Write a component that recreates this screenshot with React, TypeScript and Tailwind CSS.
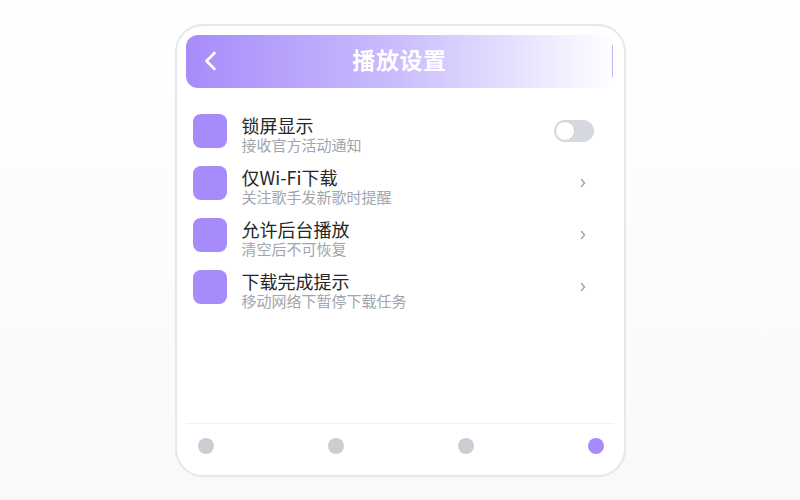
import * as React from "react";

type Item = {
  title: string;
  desc: string;
  toggle?: boolean;
};

const items: Item[] = [
  { title: "锁屏显示", desc: "接收官方活动通知", toggle: true },
  { title: "仅Wi-Fi下载", desc: "关注歌手发新歌时提醒" },
  { title: "允许后台播放", desc: "清空后不可恢复" },
  { title: "下载完成提示", desc: "移动网络下暂停下载任务" },
];

const Row = ({ title, desc, toggle }: Item) => (
  <div className="flex items-start gap-[15px] h-10">
    <div className="w-[34px] h-[34px] rounded-lg bg-[#a78bfa] shrink-0" />
    <div className="flex flex-col flex-1">
      <span className="text-[18px] leading-[22px] text-[#262626]">{title}</span>
      <span className="text-[15px] leading-[18px] text-[#a1a5ad]">{desc}</span>
    </div>
    <div className="h-[34px] flex items-center">
      {toggle ? (
        <div className="w-10 h-[22px] rounded-full bg-[#d5d8de] flex items-center px-px">
          <div className="w-5 h-5 rounded-full bg-white border border-[#d1d5db]" />
        </div>
      ) : (
        <svg width="6" height="10" viewBox="0 0 6 10" className="mr-2">
          <polyline
            points="1.5,1.5 4.5,5 1.5,8.5"
            fill="none"
            stroke="#9ca3af"
            strokeWidth="1.4"
            strokeLinecap="round"
            strokeLinejoin="round"
          />
        </svg>
      )}
    </div>
  </div>
);

export default function App() {
  return (
    <div
      className="h-[500px] w-full flex items-center justify-center bg-linear-to-b from-white to-[#f9f9fa]"
      style={{ fontFamily: '"Noto Sans CJK SC", "Noto Sans", sans-serif' }}
    >
      <div className="w-[451px] h-[453px] rounded-[28px] border-2 border-[#e6e7eb] bg-white flex flex-col pt-[9px] pl-[9px] pr-[10px]">
        <div className="h-[53px] rounded-xl bg-linear-to-r from-[#a78bfa] via-[#cbbdfd] to-white grid grid-cols-[1fr_auto_1fr] items-center">
          <div className="pl-[18px]">
            <svg width="13" height="20" viewBox="0 0 13 20">
              <polyline
                points="10.5,2 2.5,10 10.5,18"
                fill="none"
                stroke="white"
                strokeWidth="2.6"
                strokeLinecap="round"
                strokeLinejoin="round"
              />
            </svg>
          </div>
          <h1 className="text-[23px] leading-8 pb-1 font-bold text-white tracking-wide">播放设置</h1>
          <div className="flex justify-end pr-px">
            <div className="w-px h-8 bg-[#c4b5fd]" />
          </div>
        </div>

        <div className="flex flex-col gap-3 mt-[26px] pl-[7px] pr-[20px]">
          {items.map((it) => (
            <Row key={it.title} {...it} />
          ))}
        </div>

        <div className="flex-1" />

        <div className="border-t border-[#f0f1f4] flex justify-between items-center pt-[14px] pb-[21px] pl-3 pr-[10px]">
          <div className="w-4 h-4 rounded-full bg-[#c9cdd4]" />
          <div className="w-4 h-4 rounded-full bg-[#c9cdd4]" />
          <div className="w-4 h-4 rounded-full bg-[#c9cdd4]" />
          <div className="w-4 h-4 rounded-full bg-[#a78bfa]" />
        </div>
      </div>
    </div>
  );
}
